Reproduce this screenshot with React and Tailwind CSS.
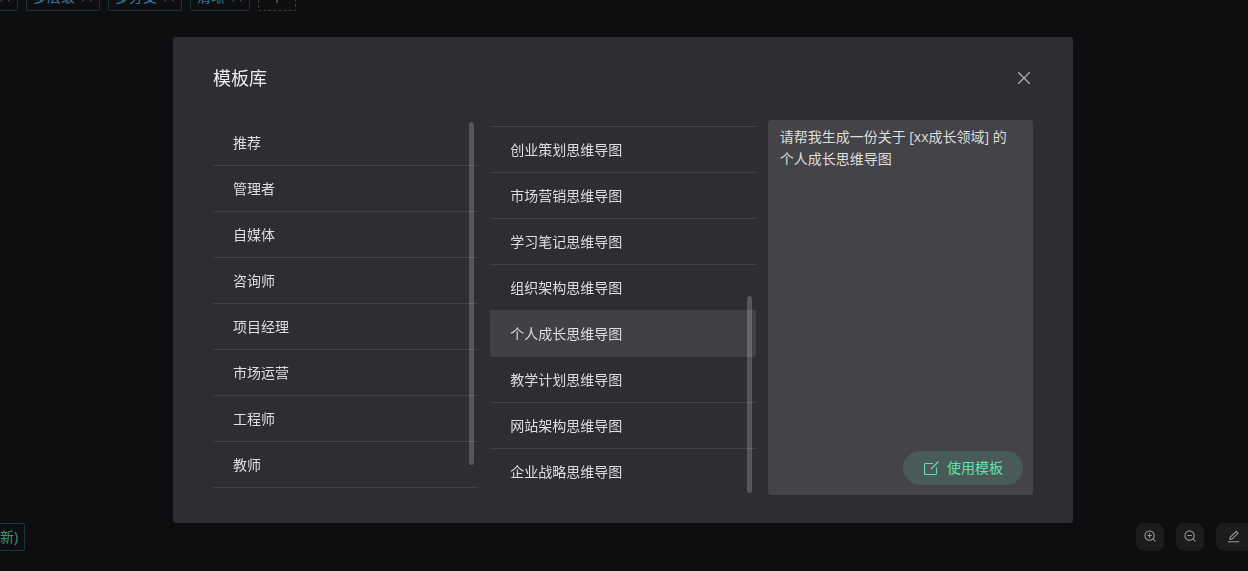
import { useState } from "react";
import { AiOutlineEdit, AiOutlineZoomIn, AiOutlineZoomOut } from "react-icons/ai";

const ROLES = ["推荐", "管理者", "自媒体", "咨询师", "项目经理", "市场运营", "工程师", "教师"];

const TEMPLATES = [
  "创业策划思维导图",
  "市场营销思维导图",
  "学习笔记思维导图",
  "组织架构思维导图",
  "个人成长思维导图",
  "教学计划思维导图",
  "网站架构思维导图",
  "企业战略思维导图",
];

export default function App() {
  const [selected, setSelected] = useState("个人成长思维导图");

  return (
    <div className="h-screen overflow-hidden bg-[#0e0e10] text-sm font-['Open_Sans','Noto_Sans_CJK_SC',sans-serif]">
      <div className="flex h-full flex-col justify-between">
        {/* Keyword tags, scrolled under the top edge */}
        <div className="-mt-[17px] -ml-[42px] flex gap-2">
          <Tag label="专业" />
          <Tag label="多层级" />
          <Tag label="多分支" />
          <Tag label="清晰" />
          <button
            aria-label="添加"
            className="flex h-7 w-[38px] items-center justify-center rounded-xs border border-dashed border-[#3a3a3d] text-[#7a7a7c]"
          >
            <svg viewBox="0 0 12 12" className="size-3" stroke="currentColor">
              <path d="M6 0v12M0 6h12" />
            </svg>
          </button>
        </div>

        <div className="mb-5 flex justify-between">
          <button className="h-7 rounded-r-xs border border-l-0 border-[#1d3530] pr-1.5 text-[#3b9878]">新)</button>
          <div className="-mr-2 flex gap-3 text-[#98989a]">
            <button aria-label="放大" className="flex size-7 items-center justify-center rounded-lg bg-[#1c1c1e] pb-0.5">
              <AiOutlineZoomIn size={14} />
            </button>
            <button aria-label="缩小" className="flex size-7 items-center justify-center rounded-lg bg-[#1c1c1e] pb-0.5">
              <AiOutlineZoomOut size={14} />
            </button>
            <button aria-label="编辑" className="flex h-7 w-10 items-center rounded-l-lg bg-[#1c1c1e] pb-0.5 pl-2.5">
              <AiOutlineEdit size={15} />
            </button>
          </div>
        </div>
      </div>

      <div className="fixed inset-0 flex items-start justify-center pt-[37px] pr-0.5">
        <div
          role="dialog"
          aria-labelledby="library-title"
          className="w-full max-w-[900px] rounded-[3px] bg-[#2e2d32] px-10 pt-[29px] pb-7 text-[#dededf] shadow-md"
        >
          <div className="mb-[30px] flex h-6 items-center justify-between">
            <h2 id="library-title" className="text-lg leading-6 text-[#ececec]">模板库</h2>
            <button aria-label="关闭" className="p-[3px] text-[#a8a8ab]">
              <svg viewBox="0 0 12 12" className="size-3" stroke="currentColor" strokeWidth="1.4">
                <path d="M0 0l12 12M12 0L0 12" />
              </svg>
            </button>
          </div>

          <div className="grid h-[375px] grid-cols-3 gap-3">
            <div className="relative overflow-hidden">
              <ul>
                {ROLES.map((role) => (
                  <Row key={role} label={role} />
                ))}
              </ul>
              <div className="absolute top-0.5 right-1 h-[343px] w-[5px] rounded-sm bg-white/20" />
            </div>

            <div className="relative overflow-hidden pt-1.5">
              <ul className="border-t border-[#424146]">
                {TEMPLATES.map((name, i) => (
                  <Row
                    key={name}
                    label={name}
                    active={name === selected}
                    last={i === TEMPLATES.length - 1}
                    onClick={() => setSelected(name)}
                  />
                ))}
              </ul>
              <div className="absolute right-1 bottom-0.5 h-[197px] w-[5px] rounded-sm bg-white/20" />
            </div>

            <div className="flex flex-col justify-between rounded-[3px] bg-[#444347]">
              <p className="pt-1.5 pr-6 pl-3 leading-[22px]">请帮我生成一份关于 [xx成长领域] 的个人成长思维导图</p>
              <button className="mr-2.5 mb-2.5 flex h-[34px] items-center gap-2 self-end rounded-full bg-[#485b58] px-5 text-[#62e0b4]">
                <svg viewBox="0 0 16 16" className="size-4" fill="none" stroke="currentColor" strokeWidth="1.1">
                  <path d="M10 3.500H2.500a1 1 0 0 0-1 1v9a1 1 0 0 0 1 1h10a1 1 0 0 0 1-1V7.500M8 9l7.500-7.500" />
                </svg>
                使用模板
              </button>
            </div>
          </div>
        </div>
      </div>
    </div>
  );
}

function Row({ label, active, last, onClick }) {
  let look = "h-[46px] border-b border-[#424146]";
  if (last) look = "h-[46px]";
  if (active) look = "-mt-px h-[47px] rounded-[3px] bg-[#414044]";

  return (
    <li className={look}>
      <button onClick={onClick} className="h-full w-full px-5 text-left">
        {label}
      </button>
    </li>
  );
}

function Tag({ label }) {
  return (
    <span className="flex h-7 items-center gap-1.5 rounded-xs border border-[#1f2f38] px-1.5 text-[#38789c]">
      {label}
      <button aria-label={"移除" + label} className="text-[#3a6078]">
        <svg viewBox="0 0 12 12" className="size-3" stroke="currentColor">
          <path d="M1.500 1.500l9 9M10.500 1.500l-9 9" />
        </svg>
      </button>
    </span>
  );
}
